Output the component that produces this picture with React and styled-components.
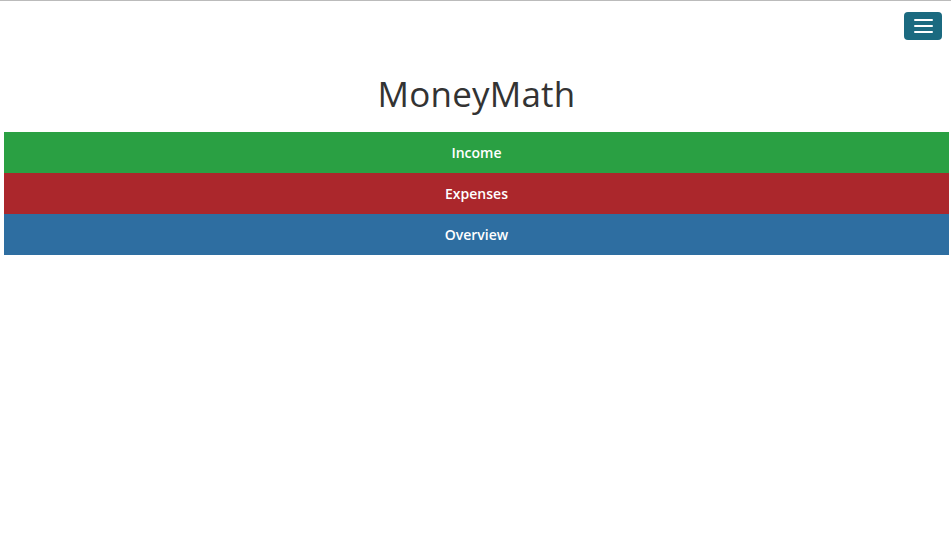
import React from "react";
import styled, { createGlobalStyle } from "styled-components";

const GlobalStyle = createGlobalStyle`
  html, body {
    margin: 0;
    padding: 0;
    background: #fff;
    font-family: "Open Sans", "Liberation Sans", sans-serif;
  }
`;

const Page = styled.div`
  border-top: 1px solid #bbbbbb;
  padding: 0 2px 0 4px;
`;

const TopBar = styled.div`
  display: flex;
  justify-content: flex-end;
  padding: 11px 7px 0 0;
`;

const MenuButton = styled.button`
  width: 38px;
  height: 28px;
  border: none;
  border-radius: 4px;
  background: #1b6a80;
  display: flex;
  flex-direction: column;
  justify-content: center;
  align-items: center;
  gap: 4px;
  padding: 0;
  cursor: pointer;
`;

const MenuLine = styled.span`
  display: block;
  width: 19px;
  height: 2px;
  border-radius: 1px;
  background: #fff;
`;

const Title = styled.h1`
  margin: 30px 0 0;
  height: 62px;
  text-align: center;
  font-family: "Open Sans", "Liberation Sans", sans-serif;
  font-weight: 400;
  font-size: 35px;
  line-height: 48px;
  color: #333;
  letter-spacing: 0.2px;
`;

const Nav = styled.nav`
  display: flex;
  flex-direction: column;
`;

const NavItem = styled.a`
  display: flex;
  align-items: center;
  justify-content: center;
  height: 41px;
  background: ${props => props.color};
  color: #fff;
  font-size: 14px;
  font-weight: 600;
  text-decoration: none;
  cursor: pointer;
`;

const items = [
  { label: "Income", color: "#2aa043" },
  { label: "Expenses", color: "#ab272c" },
  { label: "Overview", color: "#2e6ea1" },
];

const App = () => {
  return (
    <>
      <GlobalStyle />
      <Page>
        <TopBar>
          <MenuButton aria-label="menu">
            <MenuLine />
            <MenuLine />
            <MenuLine />
          </MenuButton>
        </TopBar>
        <Title>MoneyMath</Title>
        <Nav>
          {items.map(item => (
            <NavItem key={item.label} color={item.color}>
              {item.label}
            </NavItem>
          ))}
        </Nav>
      </Page>
    </>
  );
};

export default App;
